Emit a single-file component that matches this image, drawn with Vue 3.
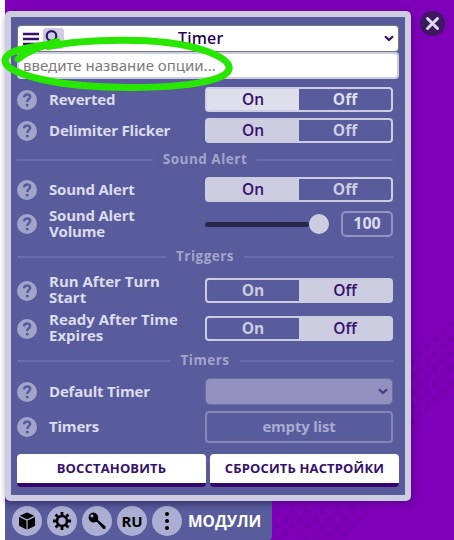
<script setup>
import { ref } from 'vue'

const rows = ref([
  { kind: 'toggle', label: 'Reverted', on: true, cls: 'h31 hovered' },
  { kind: 'toggle', label: 'Delimiter Flicker', on: true, cls: 'h31' },
  { kind: 'divider', label: 'Sound Alert', cls: 'h27' },
  { kind: 'toggle', label: 'Sound Alert', on: true, cls: 'h33' },
  { kind: 'range', label: 'Sound Alert Volume', value: 100, cls: 'h36' },
  { kind: 'divider', label: 'Triggers', cls: 'h29' },
  { kind: 'toggle', label: 'Run After Turn Start', on: false, cls: 'h39 wrapped' },
  { kind: 'toggle', label: 'Ready After Time Expires', on: false, cls: 'h37 wrapped' },
  { kind: 'divider', label: 'Timers', cls: 'h27' },
  { kind: 'select', label: 'Default Timer', cls: 'h35' },
  { kind: 'list', label: 'Timers', cls: 'h36' },
])
</script>

<template>
  <div class="page">
    <svg class="dots" width="454" height="540">
      <defs>
        <pattern id="dot" width="15" height="15" patternUnits="userSpaceOnUse" x="416" y="5">
          <circle cx="4" cy="4" r="3" />
          <circle cx="11.5" cy="11.5" r="3" />
        </pattern>
      </defs>
      <path d="M454 318L420 350L411 362V432L426 420L454 386Z" fill="url(#dot)" />
      <path d="M272 507H372L350 540H272Z" fill="url(#dot)" />
    </svg>

    <div class="panel">
      <div class="title">
        <svg class="burger" width="16" height="14" viewBox="0 0 16 14"><path d="M0 2H16M0 7H16M0 12H16" /></svg>
        <span class="find"><svg width="21" height="20" viewBox="0 0 21 20"><circle cx="8.5" cy="8" r="4.8" /><path d="M12 11.5L17 16.5" /></svg></span>
        <span class="name">Timer</span>
        <svg class="chev" width="10" height="7" viewBox="0 0 10 7"><path d="M1 1.2L5 5L9 1.2" /></svg>
      </div>
      <div class="search">введите название опции...</div>

      <div class="rows">
        <div v-for="(r, i) in rows" :key="i" class="row" :class="[r.kind, r.cls]">
          <template v-if="r.kind === 'divider'">
            <i class="line"></i><span class="section">{{ r.label }}</span><i class="line"></i>
          </template>
          <template v-else>
            <svg class="help" width="20" height="20" viewBox="0 0 20 20">
              <circle cx="10" cy="10" r="10" />
              <path d="M7 7.4C7.3 5.1 8.7 4.5 10.1 4.5C12.1 4.5 13.1 5.7 13.1 7C13.1 9.2 10.2 9.1 10.2 12" />
              <rect x="8.8" y="13.7" width="2.8" height="2.8" rx="1.1" />
            </svg>
            <span class="label">{{ r.label }}</span>
            <div v-if="r.kind === 'toggle'" class="switch">
              <span :class="{ active: r.on }">On</span>
              <span :class="{ active: !r.on }">Off</span>
            </div>
            <div v-else-if="r.kind === 'range'" class="slider">
              <i class="track"></i><i class="thumb"></i><span class="value">{{ r.value }}</span>
            </div>
            <div v-else-if="r.kind === 'select'" class="dropdown">
              <svg class="chev" width="10" height="7" viewBox="0 0 10 7"><path d="M1 1.2L5 5L9 1.2" /></svg>
            </div>
            <div v-else class="empty">empty list</div>
          </template>
        </div>
      </div>

      <div class="actions">
        <button class="restore">ВОССТАНОВИТЬ</button>
        <button class="reset">СБРОСИТЬ НАСТРОЙКИ</button>
      </div>
    </div>

    <div class="toolbar">
      <span class="tool"><svg width="18" height="18" viewBox="0 0 18 18"><path d="M9 .5L16.3 3.8L9 7.3L1.7 3.8ZM1 5.1L8.4 8.6V17.5L1 13.8ZM17 5.1L9.6 8.6V17.5L17 13.8Z" /></svg></span>
      <span class="tool"><svg width="18" height="18" viewBox="0 0 18 18"><circle class="gear" cx="9" cy="9" r="5" /><path class="teeth" d="M9 0V4M9 14V18M0 9H4M14 9H18M2.6 2.6L5.4 5.4M12.6 12.6L15.4 15.4M2.6 15.4L5.4 12.6M12.6 5.4L15.4 2.6" /></svg></span>
      <span class="tool"><svg width="18" height="18" viewBox="0 0 18 18"><path fill-rule="evenodd" d="M5.3 .5A5 5 0 1 0 7.5 10.1L9 10L15.3 17L17.5 16.8L17.6 14.5L10 8L10.1 6.5A5 5 0 0 0 5.3 .5ZM4 2.4A1.5 1.5 0 1 1 3.9 5.4A1.5 1.5 0 0 1 4 2.4Z" /></svg></span>
      <span class="tool lang">RU</span>
      <span class="tool"><svg width="18" height="20" viewBox="0 0 18 20"><circle cx="9" cy="3" r="2" /><circle cx="9" cy="10" r="2" /><circle cx="9" cy="17" r="2" /></svg></span>
      <span class="modules">МОДУЛИ</span>
    </div>

    <svg class="close" width="25" height="25" viewBox="0 0 25 25"><circle cx="12.5" cy="12.5" r="12.5" /><path d="M7.5 7.5L17.5 17.5M17.5 7.5L7.5 17.5" /></svg>

    <svg class="marker" width="240" height="100" viewBox="0 0 240 100">
      <path d="M18 59C29 50 43 46 57 41.5M48 46.5C80 39.5 160 35.5 203 50C236 61 236 73 213 79.5C178 90 87 90 42 79.5C13 73 0 65 7 56C13 49 34 47 57 43" />
    </svg>
  </div>
</template>

<style>
body { margin: 0; overflow: hidden; background: #fff; }
</style>

<style scoped>
* { box-sizing: border-box; }
.page {
  position: relative; width: 454px; height: 540px; padding: 11px 0 0 5px; overflow: hidden;
  background: linear-gradient(90deg, #fff 5px, #7e00b8 5px);
  font-family: "Open Sans", "Noto Sans", sans-serif; font-weight: 700; color: #dcdcec;
}
svg { display: block; flex: none; }
.dots { position: absolute; left: 0; top: 0; fill: #7600ad; }
.panel {
  position: relative; z-index: 1; width: 406px; height: 490px; padding: 8px 6px 0;
  border: 6px solid #cdcde2; border-radius: 5px; background: #585b9c;
  box-shadow: 1px 2px 7px rgba(30, 0, 70, .4);
}
.title {
  position: relative; display: flex; align-items: center; height: 27px; padding: 0 5px;
  border: 1px solid #777; border-radius: 4px; background: #fff; color: #210052;
}
.burger { stroke: #35106c; stroke-width: 2.4; fill: none; }
.find { margin: 0 0 0 4px; width: 21px; height: 21px; border-radius: 3px; background: #cdcde2; }
.find svg { fill: none; stroke: #35106c; stroke-width: 2.2; }
.name { flex: 1; padding: 0 0 0 114px; font: 500 16px/23px "Noto Sans", sans-serif; letter-spacing: .2px; }
.chev { fill: none; stroke: #35106c; stroke-width: 2.2; }
.title .chev { margin-right: -1px; }
.search {
  height: 27px; padding-left: 4px; border: 2px solid #cdcde2; border-radius: 4px;
  background: #fff; color: #7b7b7b; font: 400 15px/22px "Noto Sans", sans-serif;
}
.rows { padding: 5px 6px 0 0; }
.row { display: flex; align-items: center; }
.h27 { height: 27px; } .h29 { height: 29px; } .h31 { height: 31px; } .h33 { height: 33px; }
.h35 { height: 35px; } .h36 { height: 36px; } .h37 { height: 37px; } .h39 { height: 39px; }
.help { fill: #a2a3ca; }
.help path { fill: none; stroke: #585b9c; stroke-width: 2.5; }
.help rect { fill: #585b9c; }
.label { flex: none; width: 156px; padding: 0 16px 2px 0; margin-left: 12px; font-size: 15px; line-height: 16px; letter-spacing: -.2px; }
.wrapped .label { padding: 0 10px 4px 0; letter-spacing: 0; }
.switch, .slider, .dropdown, .empty { flex: none; width: 188px; }
.switch { display: flex; height: 25px; border: 2px solid #cdcde2; border-radius: 4px; color: #cdcde2; }
.switch span { flex: 1; text-align: center; font-size: 15.5px; line-height: 20px; }
.switch .active { background: #cdcde2; color: #35106c; font-weight: 600; }
.hovered .active { background: #dfdfeb; }
.hovered .switch { color: #dfdfeb; }
.slider { display: flex; align-items: center; }
.track { width: 104px; height: 5px; border-radius: 3px; background: #272849; }
.thumb { width: 20px; height: 20px; border-radius: 50%; background: #cdcde2; }
.value {
  width: 52px; height: 26px; margin-left: 12px; border: 2px solid #9394c1; border-radius: 5px;
  text-align: center; font-size: 16px; line-height: 21px;
}
.divider { justify-content: space-between; gap: 10px; }
.line { flex: 1; height: 2px; background: #6a6cab; }
.section { color: #a4a5cc; font-size: 13.5px; line-height: 18px; padding-bottom: 1px; letter-spacing: .5px; }
.dropdown {
  display: flex; align-items: center; justify-content: flex-end; height: 27px;
  padding: 0 4px 0 0; border: 1px solid #6d6ea0; border-radius: 5px; background: #9190be;
}
.dropdown .chev { stroke: #4b3886; }
.empty {
  height: 32px; border: 2px solid #8587b9; border-radius: 4px; text-align: center;
  color: #aaabd0; font-size: 15px; line-height: 26px; letter-spacing: -.2px;
}
.actions { display: flex; gap: 4px; margin-top: 9px; }
button {
  flex: 1 1 0; height: 33px; padding: 0 0 1px; border: 0; border-bottom: 4px solid #35076b; border-radius: 4px;
  background: #fff; color: #35106c; font: 700 13px/24px "Open Sans", "Noto Sans", sans-serif; white-space: nowrap;
  letter-spacing: .15px;
}
.toolbar {
  display: flex; align-items: center; gap: 5px; width: 267px; height: 39px; padding: 1px 7px 0;
  background: linear-gradient(#4d508c, #585b9c 9px); border-radius: 0 0 4px 0;
}
.tool {
  display: flex; align-items: center; justify-content: center; flex: none; width: 30px; height: 30px;
  border-radius: 50%; background: #adaed3; color: #000;
}
.gear { fill: none; stroke: #000; stroke-width: 2.5; }
.teeth { stroke: #000; stroke-width: 2.8; }
.lang { font-size: 15px; }
.modules { margin-left: 1px; color: #fff; font-size: 15.5px; line-height: 30px; }
.close { position: absolute; left: 420px; top: 11px; fill: #3d1760; }
.close path { stroke: #dddceb; stroke-width: 3; stroke-linecap: round; }
.marker { position: absolute; z-index: 2; left: 0; top: 0; fill: none; stroke: #27e600; stroke-width: 7; stroke-linecap: round; }
</style>
